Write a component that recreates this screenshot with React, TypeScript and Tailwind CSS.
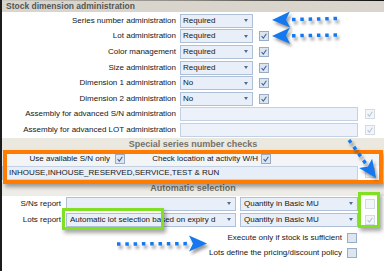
import clsx from 'clsx';

const dimensionRows = [
    { label: 'Series number administration', value: 'Required', check: false },
    { label: 'Lot administration', value: 'Required', check: true },
    { label: 'Color management', value: 'Required', check: true },
    { label: 'Size administration', value: 'Required', check: true },
    { label: 'Dimension 1 administration', value: 'No', check: true },
    { label: 'Dimension 2 administration', value: 'No', check: true },
];

const Check = ({ checked = true, disabled = false, className = '' }: { checked?: boolean; disabled?: boolean; className?: string }) => (
    <span
        className={clsx(
            'flex h-[10px] w-[10px] shrink-0 items-center justify-center border',
            disabled ? 'border-[#d3dbe6] bg-[#f2f5f9]' : 'border-[#9aabc4] bg-[#dde5ef]',
            className
        )}
    >
        {checked && (
            <svg viewBox="0 0 10 10" className="h-[8px] w-[8px]">
                <path d="M2 5.2 4.2 7.6 8 2.2" fill="none" stroke={disabled ? '#b9c4d3' : '#3d64a0'} strokeWidth="1.3" />
            </svg>
        )}
    </span>
);

const Select = ({ value = '', className = '' }: { value?: string; className?: string }) => (
    <div className={clsx('flex h-[14px] shrink-0 items-center border border-[#aebfd8] bg-[#e9eff9] pl-[2px]', className)}>
        <span className="flex-1 overflow-hidden whitespace-nowrap leading-none">{value}</span>
        <span className="mr-[4px] h-0 w-0 border-x-[2.5px] border-t-[3px] border-x-transparent border-t-[#4f6d92]" />
    </div>
);

const SectionBar = ({ title, className = '' }: { title: string; className?: string }) => (
    <div className={clsx('flex h-[14px] items-center justify-center text-[9px] font-bold text-[#74726b]', className)}>
        {title}
    </div>
);

// dotted arrow, tail (x1,y1) -> tip (x2,y2)
const Arrow = ({ x1, y1, x2, y2 }: { x1: number; y1: number; x2: number; y2: number }) => {
    const len = Math.hypot(x2 - x1, y2 - y1);
    const ang = (Math.atan2(y2 - y1, x2 - x1) * 180) / Math.PI;
    const head = 18;
    const dots: number[] = [];
    for (let d = 0; d < len - head - 2; d += 8.3) dots.push(d);
    return (
        <g transform={`translate(${x1} ${y1}) rotate(${ang})`}>
            {dots.map((d) => (
                <rect key={d} x={d} y={-1.75} width={3.5} height={3.5} />
            ))}
            <path d={`M${len} 0 L${len - head} -8 L${len - head + 4} 0 L${len - head} 8 Z`} />
        </g>
    );
};

export default function App() {
    return (
        <div className="relative h-[271px] w-[384px] overflow-hidden border-l-2 border-[#1c1c1c] bg-white font-['Liberation_Sans',Arial,sans-serif] text-[8px] text-[#161616]">
            <div className="h-[1px] bg-linear-to-r from-[#cfcbc2] via-[#8a8780] to-[#111]" />
            <div className="flex h-[11px] items-center bg-[#d9d5cd] pl-[4px] text-[8.5px] font-bold text-[#555]">
                Stock dimension administration
            </div>

            <div className="flex flex-col pt-[1px]">
                {dimensionRows.map((row) => (
                    <div key={row.label} className="flex h-[15.6px] items-center">
                        <span className="w-[174px] text-right">{row.label}</span>
                        <Select value={row.value} className="ml-[4px] w-[73px]" />
                        {row.check && <Check className="ml-[6px]" />}
                    </div>
                ))}
                {['Assembly for advanced S/N administration', 'Assembly for advanced LOT administration'].map((label) => (
                    <div key={label} className="flex h-[15.6px] items-center">
                        <span className="w-[174px] text-right">{label}</span>
                        <div className="ml-[4px] h-[14px] w-[178px] border border-[#c3d1e4] bg-[#edf2fa]" />
                        <Check disabled className="ml-[7px]" />
                    </div>
                ))}
            </div>

            <SectionBar title="Special series number checks" className="bg-[#ebe8df]" />

            <div className="flex h-[14px] items-center bg-[#f3f4f6]">
                <span className="w-[108px] text-right">Use available S/N only</span>
                <Check className="ml-[5px]" />
                <span className="w-[133px] text-right">Check location at activity W/H</span>
                <Check className="ml-[3px]" />
            </div>
            <div className="flex h-[14px] items-center">
                <div className="flex h-[14px] w-[356px] items-center border border-[#c3d1e4] bg-[#e8eef8] pl-[6px]">
                    INHOUSE,INHOUSE_RESERVED,SERVICE,TEST &amp; RUN
                </div>
                <Check checked={false} disabled className="ml-[7px]" />
            </div>

            <SectionBar title="Automatic selection" className="mt-[2px] bg-[#eeece6]" />

            <div className="flex h-[16px] items-center">
                <span className="w-[59px] text-right">S/Ns report</span>
                <Select className="ml-[5px] w-[170px]" />
                <Select value="Quantity in Basic MU" className="ml-[4px] w-[118px] pl-[3px]" />
                <Check checked={false} disabled className="ml-[7px]" />
            </div>
            <div className="flex h-[16px] items-center">
                <span className="w-[59px] text-right">Lots report</span>
                <Select value="Automatic lot selection based on expiry d" className="ml-[5px] w-[170px] pl-[3px]" />
                <Select value="Quantity in Basic MU" className="ml-[4px] w-[118px] pl-[3px]" />
                <Check disabled className="ml-[7px]" />
            </div>
            <div className="mt-[2px] flex h-[15.5px] items-center">
                <span className="w-[340px] text-right">Execute only if stock is sufficient</span>
                <Check checked={false} className="ml-[5px]" />
            </div>
            <div className="flex h-[15.5px] items-center">
                <span className="w-[340px] text-right">Lots define the pricing/discount policy</span>
                <Check checked={false} className="ml-[5px]" />
            </div>

            {/* callout annotations */}
            <div className="pointer-events-none absolute left-[1px] top-[150px] h-[34px] w-[380px] border-4 border-[#ff7c00] shadow-[2px_3px_4px_rgba(0,0,0,0.35)]" />
            <div className="pointer-events-none absolute left-[60px] top-[208px] h-[22px] w-[102px] border-[3px] border-[#82e024] shadow-[2px_3px_4px_rgba(0,0,0,0.35)]" />
            <div className="pointer-events-none absolute left-[356px] top-[192px] h-[36px] w-[22px] border-[3px] border-[#82e024] shadow-[2px_3px_4px_rgba(0,0,0,0.35)]" />

            <svg
                className="pointer-events-none absolute left-[-2px] top-0 h-[271px] w-[384px] drop-shadow-[2px_3px_1.5px_rgba(0,0,0,0.4)]"
                viewBox="0 0 384 271"
                fill="#1479f0"
            >
                <Arrow x1={337} y1={18.5} x2={272} y2={20} />
                <Arrow x1={337} y1={35} x2={272} y2={36} />
                <Arrow x1={349} y1={140} x2={376} y2={178} />
                <Arrow x1={117} y1={244} x2={207} y2={243.5} />
            </svg>
        </div>
    );
}
